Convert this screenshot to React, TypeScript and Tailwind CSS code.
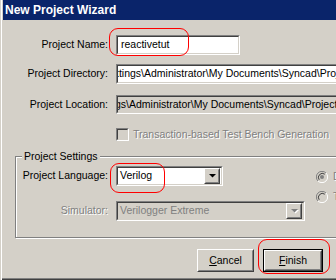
import React from 'react';

const disabledText = 'text-[#808080] [text-shadow:1px_1px_0_#ffffff]';

function Sunken({
  className = '',
  inner = '',
  children,
}: {
  className?: string;
  inner?: string;
  children?: React.ReactNode;
}) {
  return (
    <div
      className={`shrink-0 border border-t-[#808080] border-l-[#808080] border-b-white border-r-white ${className}`}
    >
      <div
        className={`h-full border border-t-[#404040] border-l-[#404040] border-b-[#d4d0c8] border-r-[#d4d0c8] overflow-hidden ${inner}`}
      >
        {children}
      </div>
    </div>
  );
}

function Raised({
  className = '',
  children,
}: {
  className?: string;
  children?: React.ReactNode;
}) {
  return (
    <div
      className={`shrink-0 border border-t-white border-l-white border-b-[#404040] border-r-[#404040] ${className}`}
    >
      <div className="h-full border border-t-[#d4d0c8] border-l-[#d4d0c8] border-b-[#808080] border-r-[#808080] flex items-center justify-center bg-[#d4d0c8]">
        {children}
      </div>
    </div>
  );
}

function Arrow({ disabled }: { disabled?: boolean }) {
  return (
    <svg width="9" height="6" viewBox="0 0 9 6">
      {disabled && <path d="M2 2h7L5.5 5.5z" fill="#ffffff" />}
      <path d="M1 1h7L4.5 4.5z" fill={disabled ? '#808080' : '#000000'} />
    </svg>
  );
}

function Radio({ checked }: { checked?: boolean }) {
  return (
    <svg width="12" height="12" viewBox="0 0 12 12" className="shrink-0">
      <circle cx="6" cy="6" r="5.5" fill="#d4d0c8" />
      <path d="M10 2 A5.5 5.5 0 0 0 2 10" fill="none" stroke="#808080" strokeWidth="1" />
      <path d="M10 2 A5.5 5.5 0 0 1 2 10" fill="none" stroke="#ffffff" strokeWidth="1" />
      <path d="M8.8 3.2 A4 4 0 0 0 3.2 8.8" fill="none" stroke="#404040" strokeWidth="1" />
      {checked && <circle cx="6" cy="6" r="2" fill="#808080" />}
    </svg>
  );
}

function Annotation({ className }: { className: string }) {
  return (
    <div
      className={`absolute border border-[#ff0000] rounded-[9px] pointer-events-none ${className}`}
    />
  );
}

export default function App() {
  return (
    <div className="relative w-[336px] h-[280px] overflow-hidden bg-[#d4d0c8] pl-[3px] font-['Liberation_Sans',Arial,sans-serif] text-[10.5px] text-black shadow-[inset_1px_0_0_#d4d0c8,inset_2px_0_0_#ffffff,inset_0_-1px_0_#404040,inset_0_-2px_0_#808080]">
      <div className="h-[20px] bg-[#0a246a] flex items-center pl-[2px] text-white font-bold text-[12px] leading-none">
        New Project Wizard
      </div>

      <div className="flex flex-col pt-[15px]">
        <div className="flex items-center h-[20px]">
          <div className="w-[105px] shrink-0 text-right">Project Name:</div>
          <Sunken className="ml-[8px] w-[124px] h-[20px]" inner="bg-white flex items-center pl-[3px]">
            reactivetut
          </Sunken>
        </div>

        <div className="flex items-center h-[20px] mt-[9px]">
          <div className="w-[105px] shrink-0 text-right">Project Directory:</div>
          <Sunken className="ml-[8px] w-[240px] h-[20px]" inner="bg-white flex items-center whitespace-nowrap">
            <span className="-ml-[2px]">ttings\Administrator\My Documents\Syncad\Projects\reactivetut</span>
          </Sunken>
        </div>

        <div className="flex items-center h-[19px] mt-[11px]">
          <div className="w-[105px] shrink-0 text-right">Project Location:</div>
          <Sunken className="ml-[8px] w-[240px] h-[19px]" inner="bg-[#d4d0c8] flex items-center whitespace-nowrap">
            <span className="-ml-[3px]">gs\Administrator\My Documents\Syncad\Projects\reactivetut</span>
          </Sunken>
        </div>

        <div className="flex items-center h-[13px] mt-[14px] pl-[113px] whitespace-nowrap">
          <Sunken className="w-[13px] h-[13px]" inner="bg-[#d4d0c8]" />
          <span className={`ml-[4px] ${disabledText}`}>Transaction-based Test Bench Generation</span>
        </div>

        <div className="relative shrink-0 mt-[15px] ml-[12px] w-[340px] h-[82px] border border-[#808080] shadow-[inset_1px_1px_0_#ffffff,1px_1px_0_#ffffff]">
          <span className="absolute -top-[7px] left-[6px] px-[2px] bg-[#d4d0c8] leading-[13px] whitespace-nowrap">
            Project Settings
          </span>
          <div className="flex pt-[9px]">
            <div className="flex flex-col w-[289px] shrink-0">
              <div className="flex items-center h-[20px]">
                <div className="w-[92px] shrink-0 text-right">Project Language:</div>
                <Sunken className="ml-[8px] w-[107px] h-[20px]" inner="bg-white flex items-center pl-[2px] pr-[1px]">
                  <span className="flex-1">Verilog</span>
                  <Raised className="w-[16px] h-[16px]">
                    <Arrow />
                  </Raised>
                </Sunken>
              </div>
              <div className="flex items-center h-[20px] mt-[15px]">
                <div className={`w-[92px] shrink-0 text-right ${disabledText}`}>Simulator:</div>
                <Sunken className="ml-[8px] w-[189px] h-[20px]" inner="bg-[#d4d0c8] flex items-center pl-[2px] pr-[1px]">
                  <span className="flex-1 text-[#808080]">Verilogger Extreme</span>
                  <Raised className="w-[16px] h-[16px]">
                    <Arrow disabled />
                  </Raised>
                </Sunken>
              </div>
            </div>
            <div className="flex flex-col shrink-0 ml-[11px] pt-[5px] gap-[8px]">
              <div className="flex items-center h-[12px] whitespace-nowrap">
                <Radio checked />
                <span className={`ml-[5px] ${disabledText}`}>Default</span>
              </div>
              <div className="flex items-center h-[12px] whitespace-nowrap">
                <Radio />
                <span className={`ml-[5px] ${disabledText}`}>Test</span>
              </div>
            </div>
          </div>
        </div>

        <div className="flex mt-[11px] pl-[194px] gap-[9px]">
          <Raised className="w-[57px] h-[23px]">
            <span>
              <span className="underline">C</span>ancel
            </span>
          </Raised>
          <div className="border border-black w-[60px] h-[23px] shrink-0">
            <Raised className="h-full">
              <span>
                <span className="underline">F</span>inish
              </span>
            </Raised>
          </div>
        </div>
      </div>

      <Annotation className="left-[109px] top-[28px] w-[80px] h-[28px]" />
      <Annotation className="left-[110px] top-[163px] w-[55px] h-[30px]" />
      <Annotation className="left-[258px] top-[239px] w-[72px] h-[35px]" />
    </div>
  );
}
